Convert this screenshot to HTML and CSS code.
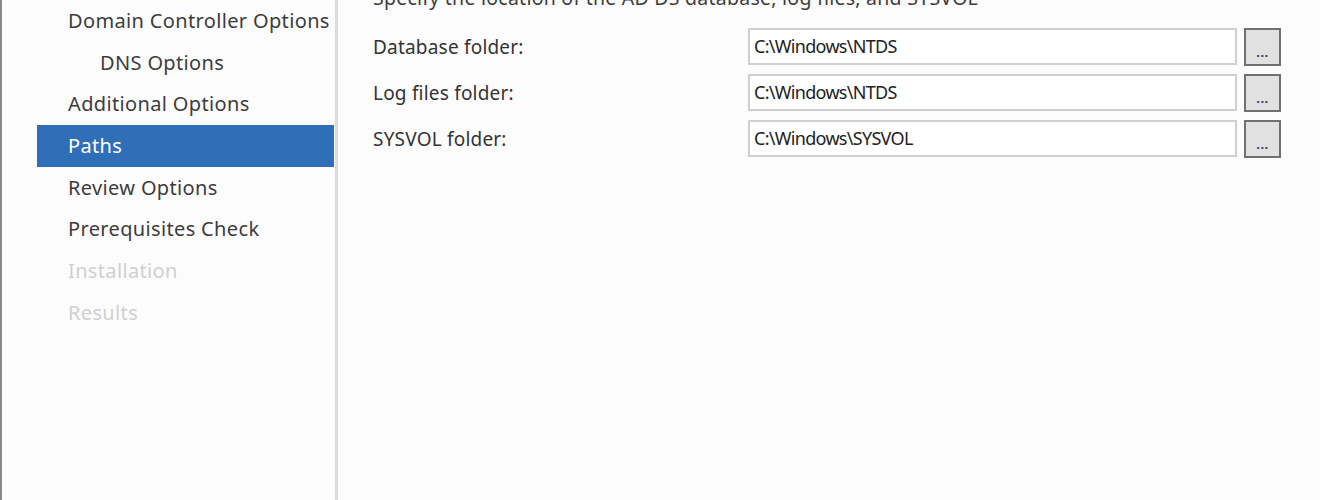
FILE: index.html
```html
<!DOCTYPE html>
<html>
<head>
<meta charset="utf-8">
<link rel="stylesheet" href="styles.css">
</head>
<body>
<div class="window">
  <nav class="nav">
    <div class="item">Domain Controller Options</div>
    <div class="item sub">DNS Options</div>
    <div class="item">Additional Options</div>
    <div class="item active">Paths</div>
    <div class="item">Review Options</div>
    <div class="item">Prerequisites Check</div>
    <div class="item disabled">Installation</div>
    <div class="item disabled">Results</div>
  </nav>
  <div class="sep"></div>
  <main class="content">
    <div class="intro">Specify the location of the AD DS database, log files, and SYSVOL</div>
    <div class="rows">
      <div class="row">
        <label class="label">Database folder:</label>
        <div class="field">C:\Windows\NTDS</div>
        <div class="browse">...</div>
      </div>
      <div class="row">
        <label class="label">Log files folder:</label>
        <div class="field">C:\Windows\NTDS</div>
        <div class="browse">...</div>
      </div>
      <div class="row">
        <label class="label">SYSVOL folder:</label>
        <div class="field">C:\Windows\SYSVOL</div>
        <div class="browse">...</div>
      </div>
    </div>
  </main>
</div>
</body>
</html>
```
FILE: styles.css
```css
html, body {
  margin: 0;
  padding: 0;
  background: #fcfcfc;
}
body {
  font-family: "Noto Sans", "Open Sans", sans-serif;
  color: #333333;
  width: 1320px;
  height: 500px;
  overflow: hidden;
}
.window {
  display: flex;
  height: 500px;
  border-left: 2px solid #8a8a8a;
  box-sizing: border-box;
}
.nav {
  width: 297px;
  margin-left: 35px;
  margin-right: 1px;
  display: flex;
  flex-direction: column;
  padding-top: 0;
}
.item {
  height: 41.7px;
  line-height: 41.7px;
  padding-left: 31px;
  font-size: 20px;
  letter-spacing: 0.35px;
  color: #3c3c3c;
  white-space: nowrap;
  box-sizing: border-box;
}
.item:first-child {
  margin-top: 0;
}
.item.sub {
  padding-left: 63px;
}
.item.active {
  background: #2f6fb8;
  color: #ffffff;
}
.item.disabled {
  color: #d0d0d0;
}
.sep {
  width: 3px;
  background: #dcdcdc;
  height: 100%;
}
.content {
  flex: 1;
  padding-left: 35px;
}
.intro {
  font-size: 19.5px;
  letter-spacing: 0.25px;
  line-height: 24px;
  margin-top: -14px;
  color: #3c3c3c;
  white-space: nowrap;
}
.rows {
  margin-top: 18px;
  display: flex;
  flex-direction: column;
  gap: 9px;
}
.row {
  display: flex;
  align-items: center;
  height: 37px;
}
.label {
  width: 375px;
  font-size: 19px;
  letter-spacing: 0.2px;
  color: #333333;
}
.field {
  width: 489px;
  height: 37px;
  box-sizing: border-box;
  border: 2px solid #cfcfcf;
  background: #ffffff;
  font-size: 18px;
  line-height: 33px;
  padding-left: 4px;
  color: #222222;
  letter-spacing: -0.7px;
}
.browse {
  margin-left: 7px;
  width: 37px;
  height: 38px;
  box-sizing: border-box;
  border: 2px solid #707070;
  background: #e1e1e1;
  font-size: 13px;
  text-align: center;
  line-height: 44px;
  color: #3a3a5a;
  font-weight: bold;
  letter-spacing: 0.5px;
}
```
